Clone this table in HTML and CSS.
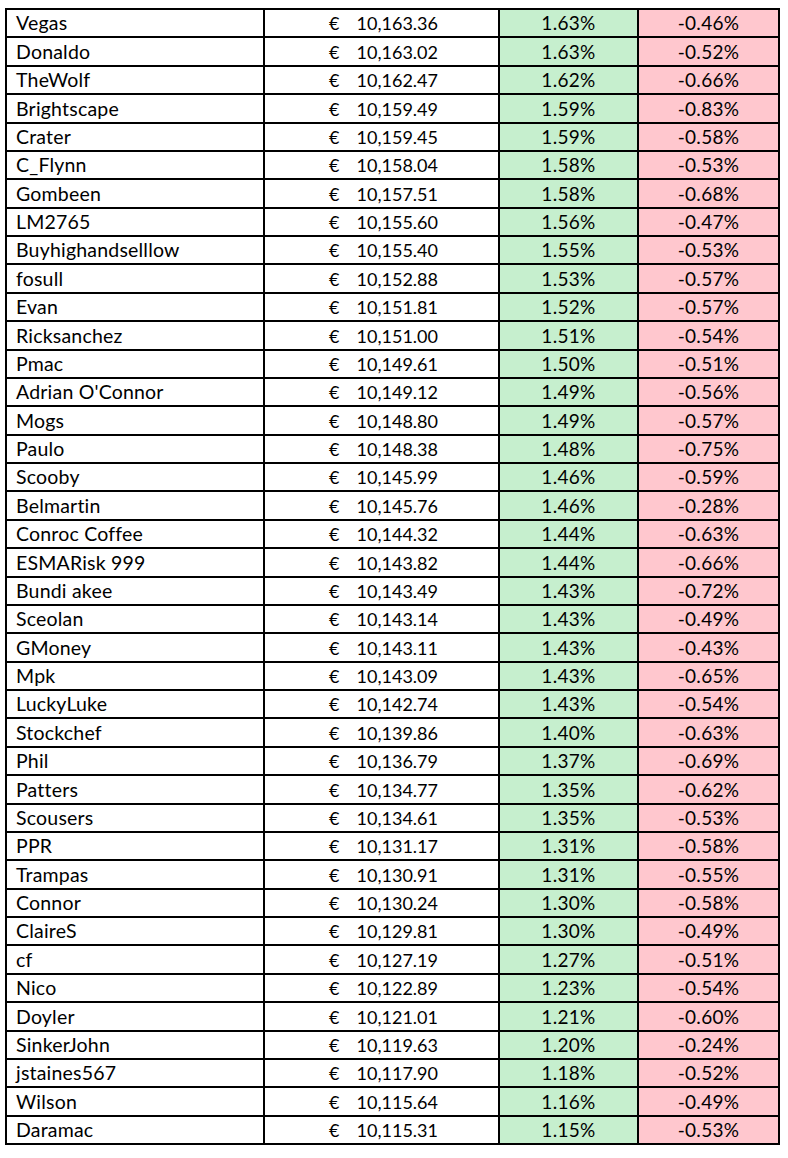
FILE: index.html
```html
<!DOCTYPE html>
<html>
<head>
<meta charset="utf-8">
<link rel="stylesheet" href="styles.css">
</head>
<body>
<table class="sheet">
<colgroup><col class="c-name"><col class="c-val"><col class="c-up"><col class="c-down"></colgroup>
<tbody>
<tr><td class="name">Vegas</td><td class="val"><div class="acc"><span>€</span><span>10,163.36</span></div></td><td class="up">1.63%</td><td class="down">-0.46%</td></tr>
<tr><td class="name">Donaldo</td><td class="val"><div class="acc"><span>€</span><span>10,163.02</span></div></td><td class="up">1.63%</td><td class="down">-0.52%</td></tr>
<tr><td class="name">TheWolf</td><td class="val"><div class="acc"><span>€</span><span>10,162.47</span></div></td><td class="up">1.62%</td><td class="down">-0.66%</td></tr>
<tr><td class="name">Brightscape</td><td class="val"><div class="acc"><span>€</span><span>10,159.49</span></div></td><td class="up">1.59%</td><td class="down">-0.83%</td></tr>
<tr><td class="name">Crater</td><td class="val"><div class="acc"><span>€</span><span>10,159.45</span></div></td><td class="up">1.59%</td><td class="down">-0.58%</td></tr>
<tr><td class="name">C_Flynn</td><td class="val"><div class="acc"><span>€</span><span>10,158.04</span></div></td><td class="up">1.58%</td><td class="down">-0.53%</td></tr>
<tr><td class="name">Gombeen</td><td class="val"><div class="acc"><span>€</span><span>10,157.51</span></div></td><td class="up">1.58%</td><td class="down">-0.68%</td></tr>
<tr><td class="name">LM2765</td><td class="val"><div class="acc"><span>€</span><span>10,155.60</span></div></td><td class="up">1.56%</td><td class="down">-0.47%</td></tr>
<tr><td class="name">Buyhighandselllow</td><td class="val"><div class="acc"><span>€</span><span>10,155.40</span></div></td><td class="up">1.55%</td><td class="down">-0.53%</td></tr>
<tr><td class="name">fosull</td><td class="val"><div class="acc"><span>€</span><span>10,152.88</span></div></td><td class="up">1.53%</td><td class="down">-0.57%</td></tr>
<tr><td class="name">Evan</td><td class="val"><div class="acc"><span>€</span><span>10,151.81</span></div></td><td class="up">1.52%</td><td class="down">-0.57%</td></tr>
<tr><td class="name">Ricksanchez</td><td class="val"><div class="acc"><span>€</span><span>10,151.00</span></div></td><td class="up">1.51%</td><td class="down">-0.54%</td></tr>
<tr><td class="name">Pmac</td><td class="val"><div class="acc"><span>€</span><span>10,149.61</span></div></td><td class="up">1.50%</td><td class="down">-0.51%</td></tr>
<tr><td class="name">Adrian O'Connor</td><td class="val"><div class="acc"><span>€</span><span>10,149.12</span></div></td><td class="up">1.49%</td><td class="down">-0.56%</td></tr>
<tr><td class="name">Mogs</td><td class="val"><div class="acc"><span>€</span><span>10,148.80</span></div></td><td class="up">1.49%</td><td class="down">-0.57%</td></tr>
<tr><td class="name">Paulo</td><td class="val"><div class="acc"><span>€</span><span>10,148.38</span></div></td><td class="up">1.48%</td><td class="down">-0.75%</td></tr>
<tr><td class="name">Scooby</td><td class="val"><div class="acc"><span>€</span><span>10,145.99</span></div></td><td class="up">1.46%</td><td class="down">-0.59%</td></tr>
<tr><td class="name">Belmartin</td><td class="val"><div class="acc"><span>€</span><span>10,145.76</span></div></td><td class="up">1.46%</td><td class="down">-0.28%</td></tr>
<tr><td class="name">Conroc Coffee</td><td class="val"><div class="acc"><span>€</span><span>10,144.32</span></div></td><td class="up">1.44%</td><td class="down">-0.63%</td></tr>
<tr><td class="name">ESMARisk 999</td><td class="val"><div class="acc"><span>€</span><span>10,143.82</span></div></td><td class="up">1.44%</td><td class="down">-0.66%</td></tr>
<tr><td class="name">Bundi akee</td><td class="val"><div class="acc"><span>€</span><span>10,143.49</span></div></td><td class="up">1.43%</td><td class="down">-0.72%</td></tr>
<tr><td class="name">Sceolan</td><td class="val"><div class="acc"><span>€</span><span>10,143.14</span></div></td><td class="up">1.43%</td><td class="down">-0.49%</td></tr>
<tr><td class="name">GMoney</td><td class="val"><div class="acc"><span>€</span><span>10,143.11</span></div></td><td class="up">1.43%</td><td class="down">-0.43%</td></tr>
<tr><td class="name">Mpk</td><td class="val"><div class="acc"><span>€</span><span>10,143.09</span></div></td><td class="up">1.43%</td><td class="down">-0.65%</td></tr>
<tr><td class="name">LuckyLuke</td><td class="val"><div class="acc"><span>€</span><span>10,142.74</span></div></td><td class="up">1.43%</td><td class="down">-0.54%</td></tr>
<tr><td class="name">Stockchef</td><td class="val"><div class="acc"><span>€</span><span>10,139.86</span></div></td><td class="up">1.40%</td><td class="down">-0.63%</td></tr>
<tr><td class="name">Phil</td><td class="val"><div class="acc"><span>€</span><span>10,136.79</span></div></td><td class="up">1.37%</td><td class="down">-0.69%</td></tr>
<tr><td class="name">Patters</td><td class="val"><div class="acc"><span>€</span><span>10,134.77</span></div></td><td class="up">1.35%</td><td class="down">-0.62%</td></tr>
<tr><td class="name">Scousers</td><td class="val"><div class="acc"><span>€</span><span>10,134.61</span></div></td><td class="up">1.35%</td><td class="down">-0.53%</td></tr>
<tr><td class="name">PPR</td><td class="val"><div class="acc"><span>€</span><span>10,131.17</span></div></td><td class="up">1.31%</td><td class="down">-0.58%</td></tr>
<tr><td class="name">Trampas</td><td class="val"><div class="acc"><span>€</span><span>10,130.91</span></div></td><td class="up">1.31%</td><td class="down">-0.55%</td></tr>
<tr><td class="name">Connor</td><td class="val"><div class="acc"><span>€</span><span>10,130.24</span></div></td><td class="up">1.30%</td><td class="down">-0.58%</td></tr>
<tr><td class="name">ClaireS</td><td class="val"><div class="acc"><span>€</span><span>10,129.81</span></div></td><td class="up">1.30%</td><td class="down">-0.49%</td></tr>
<tr><td class="name">cf</td><td class="val"><div class="acc"><span>€</span><span>10,127.19</span></div></td><td class="up">1.27%</td><td class="down">-0.51%</td></tr>
<tr><td class="name">Nico</td><td class="val"><div class="acc"><span>€</span><span>10,122.89</span></div></td><td class="up">1.23%</td><td class="down">-0.54%</td></tr>
<tr><td class="name">Doyler</td><td class="val"><div class="acc"><span>€</span><span>10,121.01</span></div></td><td class="up">1.21%</td><td class="down">-0.60%</td></tr>
<tr><td class="name">SinkerJohn</td><td class="val"><div class="acc"><span>€</span><span>10,119.63</span></div></td><td class="up">1.20%</td><td class="down">-0.24%</td></tr>
<tr><td class="name">jstaines567</td><td class="val"><div class="acc"><span>€</span><span>10,117.90</span></div></td><td class="up">1.18%</td><td class="down">-0.52%</td></tr>
<tr><td class="name">Wilson</td><td class="val"><div class="acc"><span>€</span><span>10,115.64</span></div></td><td class="up">1.16%</td><td class="down">-0.49%</td></tr>
<tr><td class="name">Daramac</td><td class="val"><div class="acc"><span>€</span><span>10,115.31</span></div></td><td class="up">1.15%</td><td class="down">-0.53%</td></tr>
</tbody>
</table>
</body>
</html>
```
FILE: styles.css
```css
html, body {
  margin: 0;
  padding: 0;
  background: #ffffff;
}
body {
  padding: 8px 0 0 5px;
  font-family: Lato, "Open Sans", sans-serif;
  font-size: 18px;
  color: #000000;
}
.sheet {
  border-collapse: collapse;
  table-layout: fixed;
  width: 773px;
}
.c-name { width: 258px; }
.c-val { width: 235px; }
.c-up { width: 139px; }
.c-down { width: 141px; }
.sheet td {
  border: 2px solid #000000;
  height: 28.375px;
  padding: 0 0 1px 0;
  box-sizing: border-box;
  vertical-align: bottom;
  line-height: 24px;
  white-space: nowrap;
  overflow: hidden;
}
.sheet td.name {
  padding-left: 9px;
  font-size: 19.5px;
  letter-spacing: 0.2px;
}
.sheet td.val {
  padding-left: 64px;
  padding-right: 60px;
}
.acc {
  display: flex;
  justify-content: space-between;
}
.sheet td.up {
  background: #c6efce;
  text-align: center;
  font-size: 19px;
  letter-spacing: 0.3px;
}
.sheet td.down {
  background: #ffc7ce;
  text-align: center;
  font-size: 19px;
  letter-spacing: 0.3px;
}
```
